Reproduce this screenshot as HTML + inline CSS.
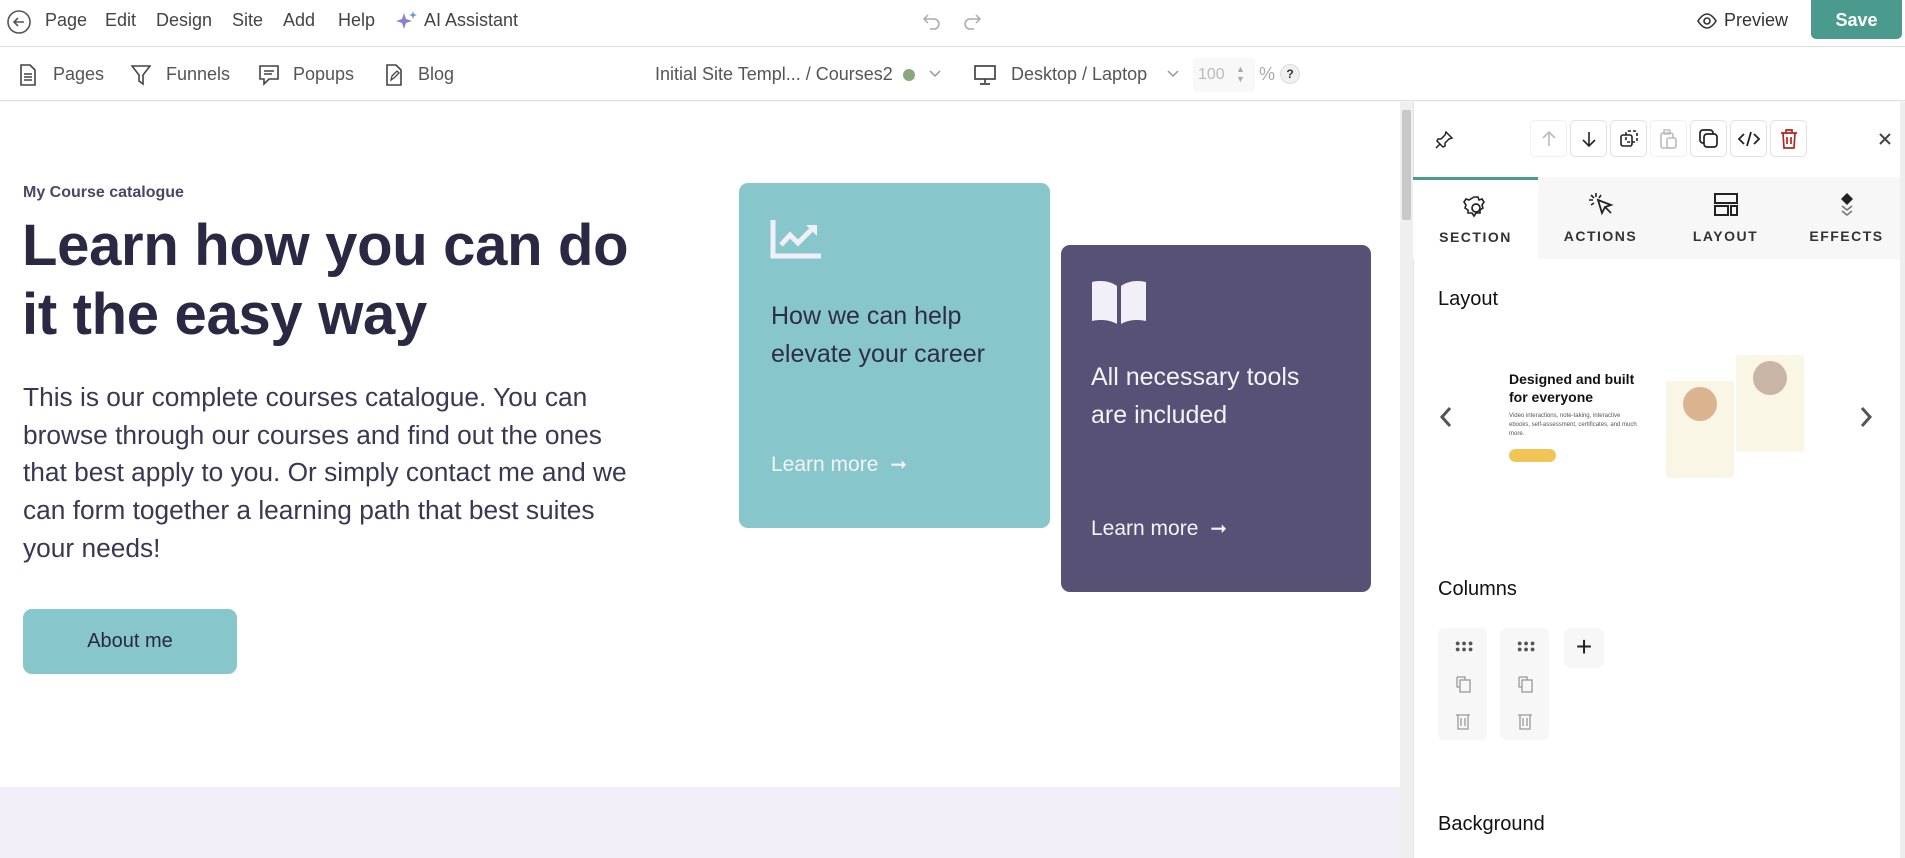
<!DOCTYPE html>
<html><head><meta charset="utf-8"><style>
*{box-sizing:border-box;margin:0;padding:0}
body{width:1905px;height:858px;overflow:hidden;background:#fff;font-family:"Liberation Sans",sans-serif;position:relative;color:#333}
.abs{position:absolute}
.top{left:0;top:0;width:1905px;height:47px;border-bottom:1px solid #ddd}
.bar2{left:0;top:47px;width:1905px;height:54px;border-bottom:1px solid #ddd;box-shadow:0 1px 3px rgba(0,0,0,.05)}
.menu{font-size:18px;color:#444;top:10px}
.b2{font-size:18px;color:#555;top:64px}
svg{display:block}
.canvas{left:0;top:102px;width:1400px;height:756px;background:#fff}
.lav{left:0;top:787px;width:1400px;height:71px;background:#f2eff9}
.scroll{left:1400px;top:102px;width:13px;height:756px;background:#efefef}
.panel{left:1413px;top:102px;width:492px;height:756px;background:#fff;border-left:1px solid #e3e3e3}
.tb{width:37px;height:37px;border:1px solid #e2e2e2;border-radius:5px;top:120px;display:flex;align-items:center;justify-content:center}
.tab{top:177px;height:82px;width:125px;text-align:center;font-size:14px;font-weight:bold;letter-spacing:1.5px;color:#333;background:#f7f7f7}
.tab span{position:absolute;left:0;right:0;top:51px}
.tab svg{position:absolute;left:50%;top:14px;margin-left:-14px}
.h3{font-size:20px;color:#111;left:1438px}
.colbox{width:49px;height:112px;top:628px;background:#f7f7f7;border-radius:6px}
</style></head><body>
<div class="abs top"></div>
<svg class="abs" style="left:6px;top:9px" width="26" height="26" viewBox="0 0 26 26"><circle cx="13" cy="13" r="11" fill="none" stroke="#555" stroke-width="1.6"/><path d="M18 13H8M12 9l-4 4 4 4" fill="none" stroke="#555" stroke-width="1.6"/></svg>
<div class="abs menu" style="left:45px">Page</div>
<div class="abs menu" style="left:105px">Edit</div>
<div class="abs menu" style="left:156px">Design</div>
<div class="abs menu" style="left:232px">Site</div>
<div class="abs menu" style="left:283px">Add</div>
<div class="abs menu" style="left:338px">Help</div>
<svg class="abs" style="left:396px;top:10px" width="22" height="22" viewBox="0 0 22 22"><path d="M8 3l2 6 6 2-6 2-2 6-2-6-6-2 6-2z" fill="#8b7fd6"/><path d="M17 1l1 3 3 1-3 1-1 3-1-3-3-1 3-1z" fill="#6b8fe0"/></svg>
<div class="abs menu" style="left:424px">AI Assistant</div>
<svg class="abs" style="left:922px;top:9px" width="60" height="22" viewBox="0 0 60 22"><path d="M6 6L2 10l4 4M2 10h10a5 5 0 010 10H8" fill="none" stroke="#aaa" stroke-width="1.5"/><path d="M54 6l4 4-4 4M58 10H48a5 5 0 000 10h4" fill="none" stroke="#aaa" stroke-width="1.5"/></svg>
<svg class="abs" style="left:1696px;top:10px" width="22" height="22" viewBox="0 0 22 22"><path d="M2 11s4-7 9-7 9 7 9 7-4 7-9 7-9-7-9-7z" fill="none" stroke="#333" stroke-width="1.6"/><circle cx="11" cy="11" r="3" fill="none" stroke="#333" stroke-width="1.6"/></svg>
<div class="abs menu" style="left:1724px;color:#333">Preview</div>
<div class="abs" style="left:1811px;top:0;width:91px;height:39px;background:#4a9b8e;border-radius:0 0 5px 5px;color:#fff;font-weight:bold;font-size:18px;text-align:center;line-height:40px">Save</div>

<div class="abs bar2"></div>
<svg class="abs" style="left:19px;top:64px" width="18" height="22" viewBox="0 0 18 22"><path d="M2 1h9l5 5v15H2z" fill="none" stroke="#444" stroke-width="1.6"/><path d="M5 10h8M5 13h8M5 16h8" stroke="#444" stroke-width="1.4"/></svg>
<div class="abs b2" style="left:53px">Pages</div>
<svg class="abs" style="left:131px;top:64px" width="20" height="22" viewBox="0 0 20 22"><path d="M1 2h18l-7 9v9l-4-3v-6z" fill="none" stroke="#444" stroke-width="1.6"/></svg>
<div class="abs b2" style="left:166px">Funnels</div>
<svg class="abs" style="left:258px;top:64px" width="22" height="22" viewBox="0 0 22 22"><path d="M2 2h18v13H11l-5 5v-5H2z" fill="none" stroke="#444" stroke-width="1.6"/><path d="M6 7h10M6 10h8" stroke="#444" stroke-width="1.4"/></svg>
<div class="abs b2" style="left:293px">Popups</div>
<svg class="abs" style="left:385px;top:64px" width="18" height="22" viewBox="0 0 18 22"><path d="M2 1h9l5 5v15H2z" fill="none" stroke="#444" stroke-width="1.6"/><path d="M6 16l1-4 5-5 2 2-5 5z" fill="none" stroke="#444" stroke-width="1.3"/></svg>
<div class="abs b2" style="left:418px">Blog</div>
<div class="abs b2" style="left:655px">Initial Site Templ... / Courses2</div>
<div class="abs" style="left:903px;top:69px;width:12px;height:12px;border-radius:50%;background:#86a87a"></div>
<svg class="abs" style="left:928px;top:69px" width="14" height="10" viewBox="0 0 14 10"><path d="M2 2l5 5 5-5" fill="none" stroke="#999" stroke-width="1.5"/></svg>
<svg class="abs" style="left:973px;top:63px" width="24" height="24" viewBox="0 0 24 24"><rect x="2" y="3" width="20" height="13" fill="none" stroke="#444" stroke-width="1.7"/><path d="M12 16v4M7 21h10" stroke="#444" stroke-width="1.7"/></svg>
<div class="abs b2" style="left:1011px">Desktop / Laptop</div>
<svg class="abs" style="left:1166px;top:69px" width="14" height="10" viewBox="0 0 14 10"><path d="M2 2l5 5 5-5" fill="none" stroke="#999" stroke-width="1.5"/></svg>
<div class="abs" style="left:1193px;top:58px;width:62px;height:34px;background:#f8f8f8;border-radius:4px"></div>
<div class="abs" style="left:1198px;top:66px;font-size:16px;color:#bbb">100</div>
<div class="abs" style="left:1236px;top:64px;font-size:9px;color:#aaa;line-height:10px">▲<br>▼</div>
<div class="abs" style="left:1259px;top:64px;font-size:18px;color:#aaa">%</div>
<div class="abs" style="left:1280px;top:64px;width:20px;height:20px;border-radius:50%;background:#f0f0f0;border:1px solid #ddd;font-size:12px;font-weight:bold;text-align:center;line-height:18px;color:#333">?</div>

<div class="abs canvas"></div>
<div class="abs lav"></div>
<div class="abs" style="left:23px;top:184px;font-size:16px;font-weight:bold;color:#4a4766">My Course catalogue</div>
<div class="abs" style="left:22px;top:211px;font-size:58px;font-weight:bold;color:#2b2844;line-height:69px;letter-spacing:-0.3px;width:700px">Learn how you can do<br>it the easy way</div>
<div class="abs" style="left:23px;top:379px;font-size:26.3px;color:#3a3752;line-height:37.7px;width:610px">This is our complete courses catalogue. You can browse through our courses and find out the ones that best apply to you. Or simply contact me and we can form together a learning path that best suites your needs!</div>
<div class="abs" style="left:23px;top:609px;width:214px;height:65px;background:#87c6ca;border-radius:9px;font-size:20px;color:#2b2844;text-align:center;line-height:65px">About me</div>

<div class="abs" style="left:739px;top:183px;width:311px;height:345px;background:#87c6ca;border-radius:9px"></div>
<svg class="abs" style="left:770px;top:220px" width="52" height="40" viewBox="0 0 52 40"><path d="M3 0v36h48" fill="none" stroke="#f2eff9" stroke-width="5"/><path d="M11 25l9-10 8 8 13-13" fill="none" stroke="#f2eff9" stroke-width="5"/><path d="M36 5h11v11z" fill="#f2eff9"/></svg>
<div class="abs" style="left:771px;top:297px;font-size:25px;line-height:38px;color:#2f2c4a">How we can help<br>elevate your career</div>
<div class="abs" style="left:771px;top:452px;font-size:21px;color:#f4f2fa">Learn more <span style="font-size:20px;margin-left:6px">➞</span></div>

<div class="abs" style="left:1061px;top:245px;width:310px;height:347px;background:#575176;border-radius:9px"></div>
<svg class="abs" style="left:1090px;top:278px" width="58" height="48" viewBox="0 0 58 48"><path d="M2 4c9-2 18-1 25 4v38c-7-4-16-5-25-3z" fill="#f2eff9"/><path d="M56 4c-9-2-18-1-25 4v38c7-4 16-5 25-3z" fill="#f2eff9"/></svg>
<div class="abs" style="left:1091px;top:358px;font-size:25px;line-height:38px;color:#f4f2fa">All necessary tools<br>are included</div>
<div class="abs" style="left:1091px;top:516px;font-size:21px;color:#f4f2fa">Learn more <span style="font-size:20px;margin-left:6px">➞</span></div>

<div class="abs scroll"><div class="abs" style="left:2px;top:8px;width:9px;height:110px;background:#c8c8c8;border-radius:2px"></div></div>
<div class="abs panel"></div>
<svg class="abs" style="left:1434px;top:130px" width="20" height="20" viewBox="0 0 20 20"><path d="M12 2l6 6-3 1-4 4 0 3-2 1-6-6 1-2 3 0 4-4z" fill="none" stroke="#222" stroke-width="1.5"/><path d="M6 14l-4 4" stroke="#222" stroke-width="1.5"/></svg>
<div class="abs tb" style="left:1530px;border-color:#eee"><svg width="20" height="20" viewBox="0 0 20 20"><path d="M10 17V3M4 9l6-6 6 6" fill="none" stroke="#bbb" stroke-width="1.6"/></svg></div>
<div class="abs tb" style="left:1570px"><svg width="20" height="20" viewBox="0 0 20 20"><path d="M10 3v14M4 11l6 6 6-6" fill="none" stroke="#222" stroke-width="1.6"/></svg></div>
<div class="abs tb" style="left:1610px"><svg width="22" height="22" viewBox="0 0 22 22"><rect x="3" y="7" width="11" height="11" rx="2" fill="none" stroke="#222" stroke-width="1.6"/><rect x="8" y="3" width="11" height="11" rx="2" fill="none" stroke="#222" stroke-width="1.6" stroke-dasharray="3 2"/></svg></div>
<div class="abs tb" style="left:1650px;border-color:#eee"><svg width="22" height="22" viewBox="0 0 22 22"><rect x="3" y="5" width="12" height="15" rx="2" fill="none" stroke="#bbb" stroke-width="1.6"/><rect x="9" y="10" width="9" height="10" rx="2" fill="#fff" stroke="#bbb" stroke-width="1.6"/><rect x="6" y="2" width="6" height="4" fill="none" stroke="#bbb" stroke-width="1.4"/></svg></div>
<div class="abs tb" style="left:1690px"><svg width="22" height="22" viewBox="0 0 22 22"><rect x="2" y="2" width="13" height="13" rx="3" fill="none" stroke="#222" stroke-width="1.7"/><rect x="6" y="6" width="13" height="13" rx="3" fill="#fff" stroke="#222" stroke-width="1.7"/></svg></div>
<div class="abs tb" style="left:1730px"><svg width="24" height="20" viewBox="0 0 24 20"><path d="M7 5l-5 5 5 5M17 5l5 5-5 5M14 3l-4 14" fill="none" stroke="#222" stroke-width="1.8"/></svg></div>
<div class="abs tb" style="left:1770px"><svg width="20" height="22" viewBox="0 0 20 22"><path d="M2 5h16M7 5V2h6v3M4 5l1 15h10l1-15M8 9v7M12 9v7" fill="none" stroke="#b3261e" stroke-width="1.7"/></svg></div>
<svg class="abs" style="left:1878px;top:132px" width="14" height="14" viewBox="0 0 14 14"><path d="M2 2l10 10M12 2L2 12" stroke="#444" stroke-width="2"/></svg>

<div class="abs tab" style="left:1413px;background:#fff;border-top:3px solid #4a9b8e"><svg width="28" height="28" viewBox="0 0 28 28"><circle cx="14" cy="14" r="4" fill="none" stroke="#222" stroke-width="1.7"/><path d="M12 3h4l1 3 3-1 2 3-2 3 1 3-3 2 0 3-4 0-2 3-2-3-4 0 0-3-3-2 1-3-2-3 2-3 3 1z" fill="none" stroke="#222" stroke-width="1.6"/></svg><span style="top:49px">SECTION</span></div>
<div class="abs tab" style="left:1538px"><svg width="28" height="28" viewBox="0 0 28 28"><path d="M11 9l13 5-6 2-3 6z" fill="none" stroke="#222" stroke-width="1.8"/><path d="M18 16l6 6M9 2v4M2 9h4M4 4l3 3M4 14l3-2M14 4l-2 3" stroke="#222" stroke-width="1.6"/></svg><span>ACTIONS</span></div>
<div class="abs tab" style="left:1663px"><svg width="28" height="28" viewBox="0 0 28 28"><rect x="3" y="3" width="22" height="9" fill="none" stroke="#222" stroke-width="2"/><rect x="3" y="15" width="13" height="9" fill="none" stroke="#222" stroke-width="2"/><rect x="19" y="15" width="6" height="9" fill="none" stroke="#222" stroke-width="2"/></svg><span>LAYOUT</span></div>
<div class="abs tab" style="left:1788px;width:117px"><svg width="28" height="28" viewBox="0 0 28 28"><path d="M14 2l6 6-6 6-6-6z" fill="#222"/><path d="M9 15l5 4 5-4M9 20l5 4 5-4" fill="none" stroke="#777" stroke-width="1.6"/></svg><span>EFFECTS</span></div>

<div class="abs h3" style="top:288px">Layout</div>
<svg class="abs" style="left:1438px;top:405px" width="16" height="24" viewBox="0 0 16 24"><path d="M12 3L4 12l8 9" fill="none" stroke="#555" stroke-width="3"/></svg>
<svg class="abs" style="left:1858px;top:405px" width="16" height="24" viewBox="0 0 16 24"><path d="M4 3l8 9-8 9" fill="none" stroke="#555" stroke-width="3"/></svg>
<div class="abs" style="left:1509px;top:370px;font-size:14px;font-weight:bold;color:#111;line-height:18px">Designed and built<br>for everyone</div>
<div class="abs" style="left:1509px;top:412px;font-size:6px;color:#555;line-height:9px;width:130px">Video interactions, note-taking, interactive ebooks, self-assessment, certificates, and much more.</div>
<div class="abs" style="left:1509px;top:449px;width:47px;height:13px;background:#f1c456;border-radius:7px"></div>
<div class="abs" style="left:1666px;top:381px;width:68px;height:97px;background:#faf6e6;border-radius:2px"></div>
<div class="abs" style="left:1683px;top:387px;width:34px;height:34px;border-radius:50%;background:#d9b48f"></div>
<div class="abs" style="left:1736px;top:355px;width:68px;height:97px;background:#faf6e6;border-radius:2px"></div>
<div class="abs" style="left:1753px;top:361px;width:34px;height:34px;border-radius:50%;background:#c9b5a5"></div>

<div class="abs h3" style="top:578px">Columns</div>
<div class="abs colbox" style="left:1438px"></div>
<div class="abs colbox" style="left:1500px"></div>
<div class="abs" style="left:1564px;top:628px;width:40px;height:40px;background:#f7f7f7;border-radius:6px;font-size:28px;text-align:center;line-height:38px;color:#222">+</div>
<div class="abs" style="left:1455px;top:640px;font-size:9px;color:#555;letter-spacing:1px;line-height:6px">●●●<br>●●●</div>
<div class="abs" style="left:1517px;top:640px;font-size:9px;color:#555;letter-spacing:1px;line-height:6px">●●●<br>●●●</div>
<svg class="abs" style="left:1455px;top:675px" width="16" height="18" viewBox="0 0 16 18"><rect x="5" y="5" width="10" height="12" fill="none" stroke="#999" stroke-width="1.3"/><path d="M2 2v10h3M2 2h8v3" fill="none" stroke="#999" stroke-width="1.3"/></svg>
<svg class="abs" style="left:1517px;top:675px" width="16" height="18" viewBox="0 0 16 18"><rect x="5" y="5" width="10" height="12" fill="none" stroke="#999" stroke-width="1.3"/><path d="M2 2v10h3M2 2h8v3" fill="none" stroke="#999" stroke-width="1.3"/></svg>
<svg class="abs" style="left:1455px;top:712px" width="16" height="18" viewBox="0 0 16 18"><path d="M1 3h14M3 3v14h10V3M6 6v8M10 6v8" fill="none" stroke="#999" stroke-width="1.3"/></svg>
<svg class="abs" style="left:1517px;top:712px" width="16" height="18" viewBox="0 0 16 18"><path d="M1 3h14M3 3v14h10V3M6 6v8M10 6v8" fill="none" stroke="#999" stroke-width="1.3"/></svg>

<div class="abs h3" style="top:813px">Background</div>
<div class="abs" style="left:1900px;top:102px;width:5px;height:756px;background:#eee"></div>
</body></html>
